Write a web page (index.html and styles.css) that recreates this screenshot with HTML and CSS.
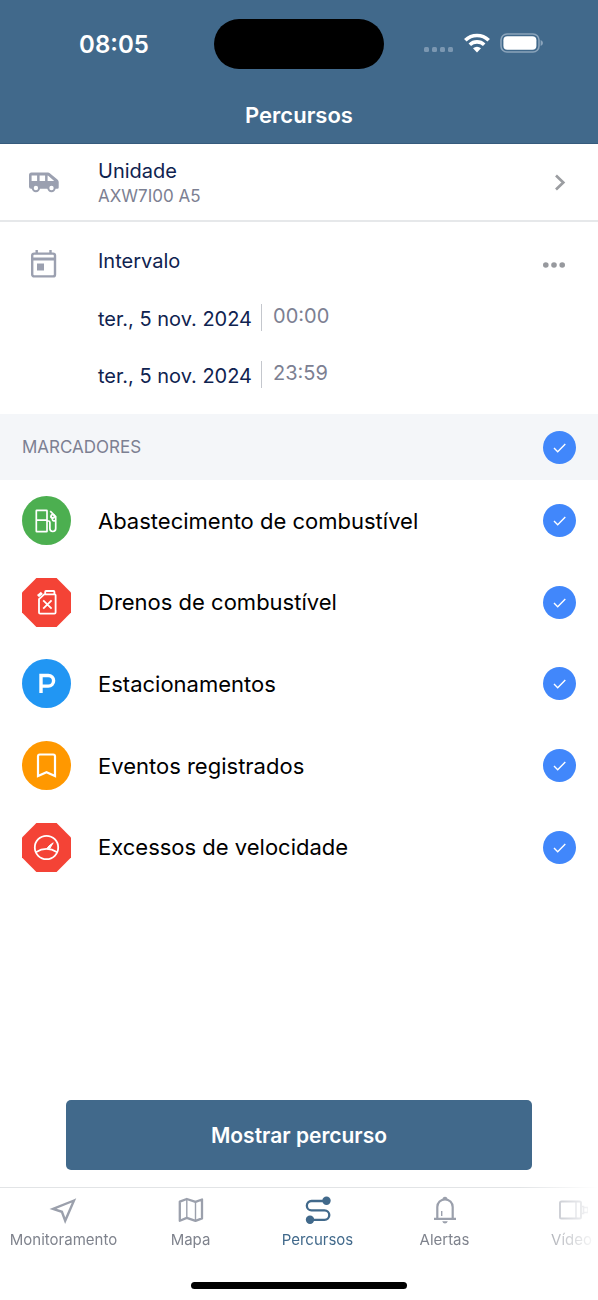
FILE: index.html
```html
<!DOCTYPE html>
<html lang="pt-BR">
<head>
<meta charset="utf-8">
<meta name="viewport" content="width=device-width, initial-scale=1">
<title>Percursos</title>
<link rel="stylesheet" href="styles.css">
</head>
<body>
<div class="app">
  <header class="header">
    <div class="status">
      <span class="time">08:05</span>
      <span class="island"></span>
      <span class="signals">
        <svg width="32" height="20" viewBox="0 0 32 20" fill="#7b97b1"><rect x="2" y="14" width="5" height="5" rx="1.5"/><rect x="10" y="14" width="5" height="5" rx="1.5"/><rect x="18" y="14" width="5" height="5" rx="1.5"/><rect x="26" y="14" width="5" height="5" rx="1.5"/></svg>
        <svg width="26" height="20" viewBox="0 0 26 20" fill="none" stroke="#fff" stroke-width="3.6"><path d="M1.3 7.2a16.8 16.8 0 0 1 23.4 0"/><path d="M5.8 11.8a10.4 10.4 0 0 1 14.4 0"/><path d="M13 19.4l-4-4.2a6 6 0 0 1 8 0z" fill="#fff" stroke="none"/></svg>
        <svg width="44" height="20" viewBox="0 0 44 20"><rect x="1" y="1" width="38" height="18" rx="6" fill="none" stroke="#8ba4bb" stroke-width="1.6"/><rect x="3.4" y="3.2" width="33" height="13.6" rx="4" fill="#fff"/><path d="M40.6 7v6q2.4-.8 2.4-3t-2.4-3z" fill="#8ba4bb"/></svg>
      </span>
    </div>
    <h1 class="title">Percursos</h1>
  </header>

  <main class="main">
    <button class="unit" type="button">
      <svg class="lead" width="32" height="24" viewBox="0 0 32 24"><path fill="#9ba0b0" fill-rule="evenodd" d="M4.500 1.500H21q1 0 1.800.7l7.600 6.300q1.300 1 1.300 2.500v5.500q0 1.300-1.300 1.300H4q-2 0-2-2V4q0-2.500 2.500-2.500zM4.600 4.500v5.500h5.500V4.500zm8 0v5.500h5.500V4.500zm8 0v5.500h6.600l-6-5.200q-.3-.3-.6-.3z"/><g fill="#fff" stroke="#9ba0b0" stroke-width="2"><circle cx="8.900" cy="17" r="3.200"/><circle cx="24.500" cy="17" r="3.200"/></g></svg>
      <span class="unit-text"><span class="label">Unidade</span><span class="sub">AXW7I00 A5</span></span>
      <svg class="chevron" width="12" height="18" viewBox="0 0 12 18" fill="none" stroke="#9b9da1" stroke-width="2.700"><path d="M2 1.500l7.300 7-7.300 7"/></svg>
    </button>

    <section class="interval">
      <svg class="lead" width="32" height="30" viewBox="0 0 32 30"><g fill="none" stroke="#9ba0b0" stroke-width="2.400"><rect x="5.200" y="5.600" width="22.800" height="22.800" rx="2"/><path d="M5.200 11H28" stroke-width="3"/><path d="M9.700 2V6M23.500 2V6"/></g><path d="M10 15.500h7v7h-7z" fill="#9ba0b0"/></svg>
      <div class="dates">
        <h2 class="label">Intervalo</h2>
        <div class="date-row"><button class="date" type="button">ter., 5 nov. 2024</button><button class="hour" type="button">00:00</button></div>
        <div class="date-row"><button class="date" type="button">ter., 5 nov. 2024</button><button class="hour" type="button">23:59</button></div>
      </div>
      <button class="more" type="button" aria-label="Mais opções"><svg width="24" height="8" viewBox="0 0 24 8" fill="#97999e"><circle cx="3.800" cy="4" r="2.800"/><circle cx="12" cy="4" r="2.800"/><circle cx="20.200" cy="4" r="2.800"/></svg></button>
    </section>

    <label class="band"><span>MARCADORES</span><input class="tick" type="checkbox" checked></label>

    <div class="list">
      <label class="item">
        <svg width="49" height="49" viewBox="0 0 49 49" fill="none" stroke="#fff" stroke-width="1.700"><circle cx="24.500" cy="24.500" r="24.500" fill="#4caf50" stroke="none"/><rect x="14.300" y="14.300" width="10.700" height="21.400" rx=".5"/><path d="M14.300 24.100H25M25 25h1.500q1.400 0 1.400 1.400v6.200a2.900 2.900 0 0 0 5.800 0V20.500l-5.500-5.300"/><path d="M33.800 24.800h-2.200q-1.200 0-1.200-1.200v-1.600l-2-1.600"/><circle cx="30.700" cy="20.300" r="1.700"/></svg>
        <span>Abastecimento de combustível</span><input class="tick" type="checkbox" checked>
      </label>
      <label class="item">
        <svg width="49" height="49" viewBox="0 0 49 49" fill="none" stroke="#fff" stroke-width="1.800"><path d="M14.400 0h20.200L49 14.400v20.200L34.600 49H14.400L0 34.600V14.400z" fill="#f44336" stroke="none"/><path d="M17 21.200l5.200-4.800h10.500q.9 0 .9.900v17.200q0 1.200-1.200 1.200H18.200q-1.200 0-1.200-1.200z"/><path d="M23.200 16v-2.200q0-.8.800-.8h7.600q.8 0 .8.800V16"/><path d="M16 18.100l3.900-3.300" stroke-width="3"/><path d="M21.200 22.300l8.400 8.400M29.600 22.300l-8.400 8.400"/></svg>
        <span>Drenos de combustível</span><input class="tick" type="checkbox" checked>
      </label>
      <label class="item">
        <svg width="49" height="49" viewBox="0 0 49 49"><circle cx="24.500" cy="24.500" r="24.500" fill="#2196f3"/><path d="M19 34V16.500h7.300a5.300 5.300 0 0 1 0 10.600H19" fill="none" stroke="#fff" stroke-width="3.400"/></svg>
        <span>Estacionamentos</span><input class="tick" type="checkbox" checked>
      </label>
      <label class="item">
        <svg width="49" height="49" viewBox="0 0 49 49"><circle cx="24.500" cy="24.500" r="24.500" fill="#ff9800"/><path d="M16 35V15.300q0-1.800 1.800-1.800h13.400q1.800 0 1.800 1.800V35l-8.500-3.800z" fill="none" stroke="#fff" stroke-width="2.200"/></svg>
        <span>Eventos registrados</span><input class="tick" type="checkbox" checked>
      </label>
      <label class="item">
        <svg width="49" height="49" viewBox="0 0 49 49" fill="none" stroke="#fff" stroke-width="1.800"><path d="M14.400 0h20.200L49 14.400v20.200L34.600 49H14.400L0 34.600V14.400z" fill="#f44336" stroke="none"/><circle cx="24.500" cy="24.500" r="11.700"/><path d="M13.800 29.200q10.700-6.500 21.400 0"/><path d="M24.800 25.600q1.300-2.600 6.400-5.800-2.200 3.600-3.600 6z" fill="#fff" stroke-width="1"/></svg>
        <span>Excessos de velocidade</span><input class="tick" type="checkbox" checked>
      </label>
    </div>
    <button class="primary" type="button">Mostrar percurso</button>
  </main>

  <nav class="tabs">
    <a class="tab" href="#"><svg width="32" height="32" viewBox="0 0 32 32" fill="none" stroke="#9ba0ac" stroke-width="2.400"><path d="M26 6.500L5 14.800l8.900 3 3.300 8.900z"/></svg>Monitoramento</a>
    <a class="tab" href="#"><svg width="32" height="32" viewBox="0 0 32 32" fill="none" stroke="#9ba0ac" stroke-width="2.300" stroke-linejoin="round"><path d="M4.800 7.600l7-2.600 8.700 2.900L27 5.500v18.900l-6.500 2.500-8.700-3-7 2.900z"/><path d="M11.800 5v18.900M20.500 7.900v19" stroke-width="1.400"/></svg>Mapa</a>
    <a class="tab active" href="#" aria-current="page"><svg width="32" height="32" viewBox="0 0 32 32" fill="none" stroke="#41698b" stroke-width="2.300"><path d="M24 7H9.500a4.600 4.600 0 0 0 0 9.300h13a4.800 4.800 0 0 1 0 9.600H8"/><g fill="#41698b" stroke="none"><circle cx="24.500" cy="6.800" r="4.200"/><circle cx="8" cy="25.800" r="4.200"/></g></svg>Percursos</a>
    <a class="tab" href="#"><svg width="32" height="32" viewBox="0 0 32 32" fill="none" stroke="#9ba0ac" stroke-width="2.200"><path d="M5 24.800h22M8.300 24.500V13a7.700 7.700 0 0 1 15.400 0v11.500"/><path d="M12.700 17v5" stroke-width="1.400"/><path d="M13.500 5.300a2.500 2.500 0 0 1 5 0zM13.200 27.200h5.600q-.8 2.300-2.800 2.300t-2.800-2.300z" fill="#9ba0ac" stroke="none"/></svg>Alertas</a>
    <a class="tab" href="#"><svg width="32" height="32" viewBox="0 0 32 32" fill="none" stroke="#9ba0ac" stroke-width="2"><rect x="4" y="7.500" width="21" height="17" rx="1.500"/><path d="M20 7.500v17" stroke-width="1.300"/><path d="M25 12.500h2.500v7H25M27.500 13.500H32v5h-4.500" stroke-width="1.600"/></svg>Vídeo</a>
  </nav>
  <div class="home"></div>
</div>
</body>
</html>
```
FILE: styles.css
```css
* { box-sizing: border-box; }
body { margin: 0; background: #fff; font-family: Inter, "Liberation Sans", sans-serif; }
button { border: 0; margin: 0; padding: 0; background: none; font: inherit; color: inherit; text-align: left; }
h1, h2 { margin: 0; font-weight: 400; }
svg { display: block; flex: none; }

.app { display: flex; flex-direction: column; min-height: 100vh; }

.header { background: #41698b; color: #fff; border-bottom: 1px solid #365b7c; padding: 19px 0 13px; }
.status { display: grid; grid-template-columns: 1fr 170px 1fr; align-items: center; }
.time { justify-self: center; padding: 2px 0 0 14px; font-size: 24px; line-height: 30px; font-weight: 600; }
.island { height: 50px; border-radius: 25px; background: #000; }
.signals { display: flex; align-items: center; justify-content: flex-end; gap: 10px; padding: 0 54px 2px 0; }
.title { margin-top: 31px; text-align: center; font-size: 22px; line-height: 30px; font-weight: 600; }

.main { flex: 1; display: flex; flex-direction: column; }
.label { color: #0f2350; font-size: 20px; line-height: 26px; }
.lead { margin: 0 39px 0 27px; }

.unit { display: flex; align-items: center; padding: 14px 32px 12px 0; border-bottom: 2px solid #e6e8ea; }
.unit-text { flex: 1; display: flex; flex-direction: column; }
.sub { color: #7c8092; font-size: 17px; line-height: 24px; }

.interval { display: flex; align-items: flex-start; padding: 26px 32px 26px 0; }
.dates { flex: 1; display: flex; flex-direction: column; gap: 30px; }
.date-row { display: flex; align-items: flex-start; line-height: 27px; font-size: 20px; }
.date { color: #0f2350; padding: 2px 9px 0 0; margin-bottom: -2px; }
.hour { color: #7c8092; border-left: 1px solid #c4c7cd; padding: 0 12px 2px 11px; line-height: 25px; }
.more { padding: 13px 0 9px; }

.band { display: flex; align-items: center; justify-content: space-between; padding: 16px 22px; background: #f4f6f9; color: #7c8092; font-size: 17px; line-height: 34px; }
.tick { appearance: none; margin: 0; flex: none; width: 33px; height: 33px; border-radius: 50%; border: 2px solid #c4c7cd; }
.tick:checked { border: 0; background: #4187fb url("data:image/svg+xml,%3Csvg xmlns='http://www.w3.org/2000/svg' viewBox='0 0 33 33'%3E%3Cpath d='M11 17l3.700 3.700 7.600-7.700' fill='none' stroke='white' stroke-width='1.400'/%3E%3C/svg%3E") center / cover; }

.list { display: grid; grid-auto-rows: 1fr; min-height: 408px; }
.item { display: flex; align-items: center; gap: 27px; padding: 0 22px; font-size: 22px; line-height: 30px; color: #000; }
.item span { flex: 1; }

.primary { margin: auto 66px 17px; padding: 21px 20px 19px; border-radius: 5px; background: #41698b; color: #fff; text-align: center; font-size: 21px; line-height: 30px; font-weight: 600; }

.tabs { display: grid; grid-template-columns: repeat(5, 127px); overflow: hidden; border-top: 1px solid #e2e4e6; padding: 6px 0 0; mask-image: linear-gradient(to right, #000 calc(100% - 78px), transparent); }
.tab { display: flex; flex-direction: column; align-items: center; gap: 4px; color: #7f838d; font-size: 15px; line-height: 20px; text-decoration: none; }
.active { color: #41698b; }
.home { align-self: center; width: 36%; height: 7px; margin: 32px 0 11px; border-radius: 4px; background: #000; }
```
